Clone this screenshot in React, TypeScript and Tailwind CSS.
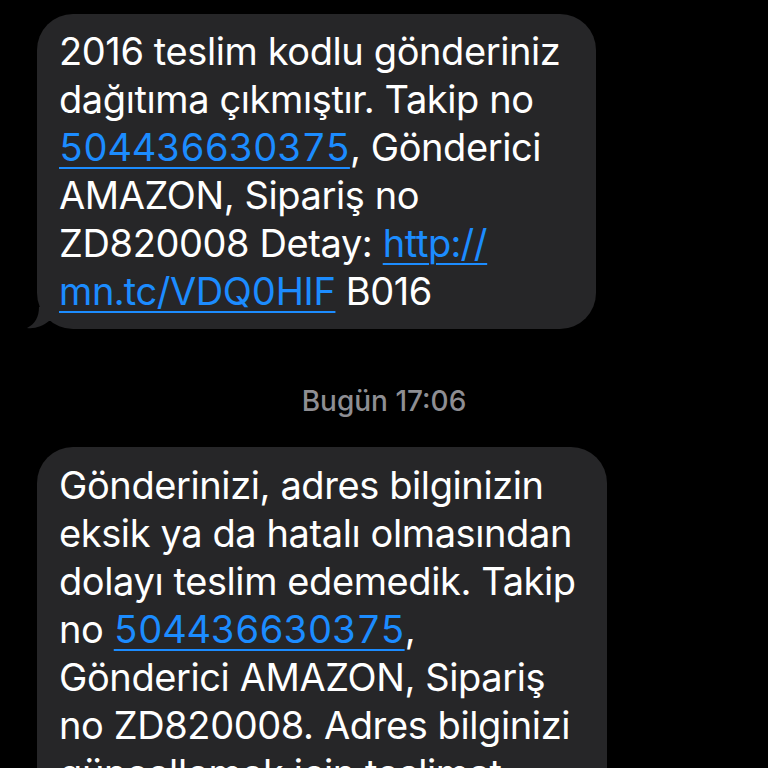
export default function App() {
  const font = { fontFamily: "Inter, 'Liberation Sans', sans-serif" };
  const link = "text-[#1c8cff] underline decoration-2 underline-offset-[6px] tabular-nums";
  return (
    <div className="w-[768px] h-[768px] overflow-hidden bg-black" style={font}>
      <div className="pt-[14px] pl-[37px] flex flex-col">
        {/* first message */}
        <div className="relative w-[559px] rounded-[36px] bg-[#262628] pl-[22px] pr-4 pt-[13px] pb-[14px] text-[38px] leading-[48px] text-white tracking-[-0.4px]">
          2016 teslim kodlu gönderiniz
          <br />
          dağıtıma çıkmıştır. Takip no
          <br />
          <span className={link}>504436630375</span>, Gönderici
          <br />
          AMAZON, Sipariş no
          <br />
          ZD820008 Detay: <span className={link}>http://</span>
          <br />
          <span className={link}>mn.tc/VDQ0HIF</span> B016
          <svg className="absolute -left-[10px] bottom-0" width="30" height="22" viewBox="0 0 30 22">
            <path d="M12 0 C12 10 8 17 0 21 C8 22 16 19 22 14 L30 14 L30 0 Z" fill="#262628" />
          </svg>
        </div>

        {/* timestamp */}
        <div className="mt-[55px] w-[694px] text-center text-[28px] leading-[34px] font-medium text-[#8e8e93]">
          Bugün 17:06
        </div>

        {/* second message */}
        <div className="mt-[29px] w-[570px] rounded-[36px] bg-[#262628] pl-[22px] pr-4 pt-[14px] pb-[14px] text-[38px] leading-[48px] text-white tracking-[-0.4px]">
          Gönderinizi, adres bilginizin
          <br />
          eksik ya da hatalı olmasından
          <br />
          dolayı teslim edemedik. Takip
          <br />
          no <span className={link}>504436630375</span>,
          <br />
          Gönderici AMAZON, Sipariş
          <br />
          no ZD820008. Adres bilginizi
          <br />
          güncellemek için teslimat
        </div>
      </div>
    </div>
  );
}
